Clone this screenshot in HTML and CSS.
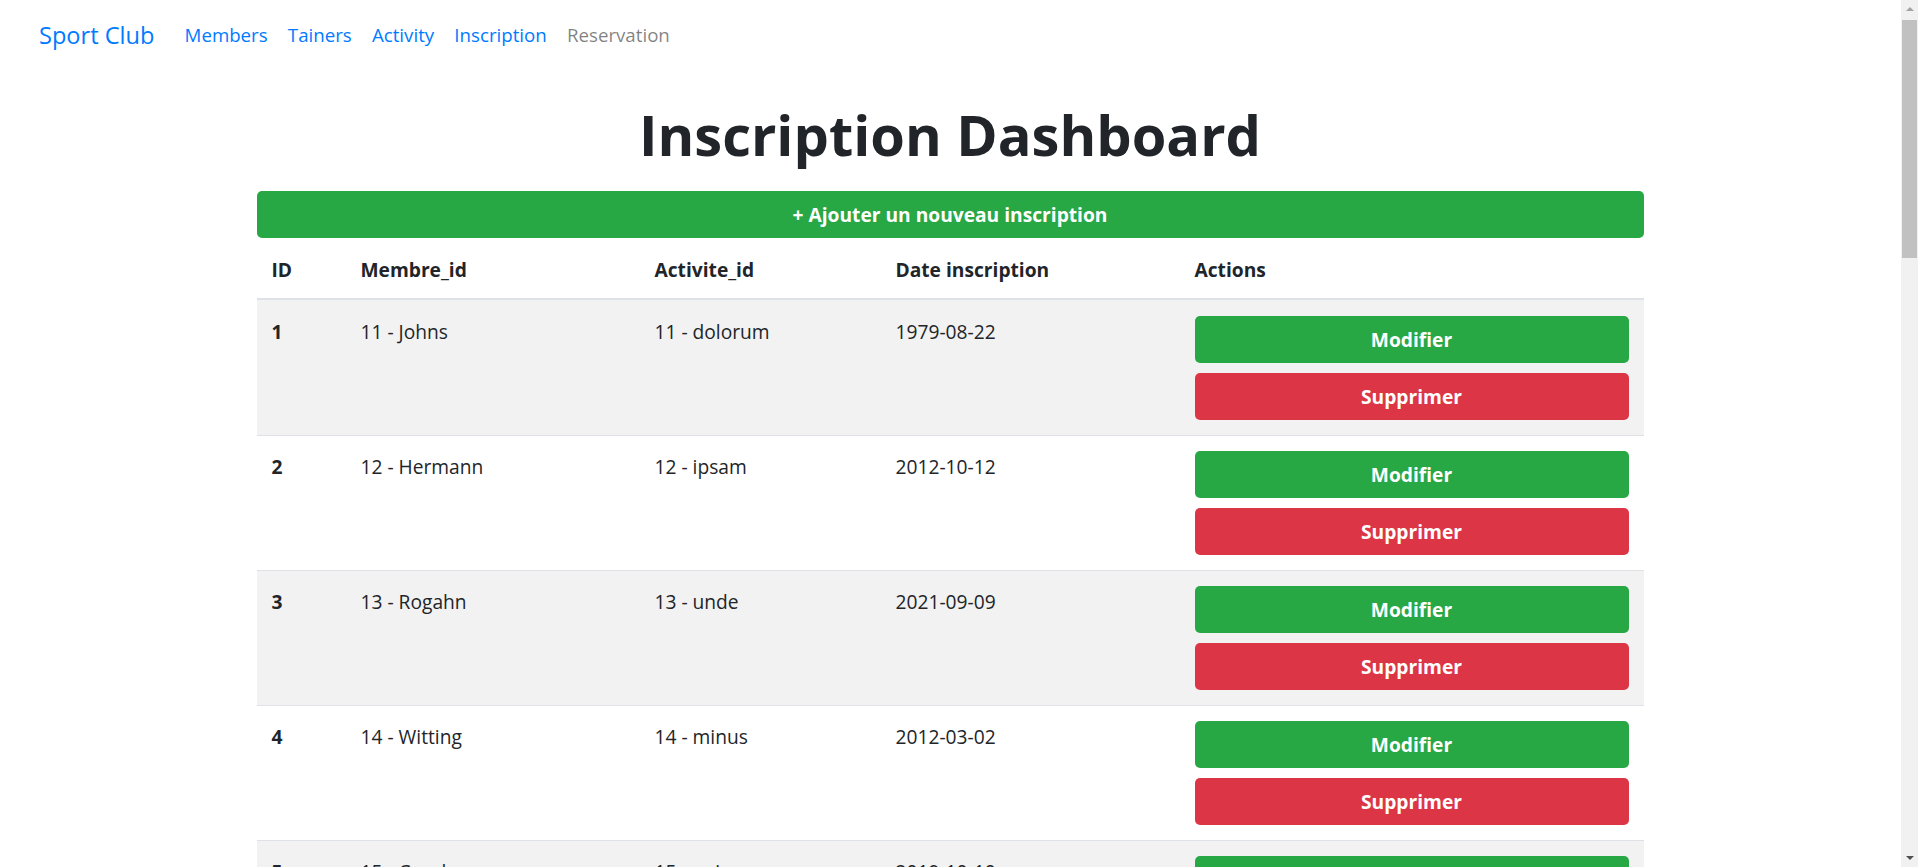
FILE: index.html
```html
<!DOCTYPE html>
<html lang="fr">
<head>
<meta charset="utf-8">
<title>Inscription Dashboard</title>
<link rel="stylesheet" href="styles.css">
</head>
<body>
<nav class="navbar">
  <a class="brand" href="#">Sport Club</a>
  <ul class="nav">
    <li><a class="nav-link" href="#">Members</a></li>
    <li><a class="nav-link" href="#">Tainers</a></li>
    <li><a class="nav-link" href="#">Activity</a></li>
    <li><a class="nav-link" href="#">Inscription</a></li>
    <li><a class="nav-link muted" href="#">Reservation</a></li>
  </ul>
</nav>
<main class="container">
  <h1 class="title">Inscription Dashboard</h1>
  <a class="btn btn-success btn-add" href="#">+ Ajouter un nouveau inscription</a>
  <table class="table">
    <colgroup>
      <col class="c-id"><col class="c-membre"><col class="c-act"><col class="c-date"><col class="c-actions">
    </colgroup>
    <thead>
      <tr><th>ID</th><th>Membre_id</th><th>Activite_id</th><th>Date inscription</th><th>Actions</th></tr>
    </thead>
    <tbody>
      <tr><th>1</th><td>11 - Johns</td><td>11 - dolorum</td><td>1979-08-22</td><td class="actions"><a class="btn btn-success" href="#">Modifier</a><a class="btn btn-danger" href="#">Supprimer</a></td></tr>
      <tr><th>2</th><td>12 - Hermann</td><td>12 - ipsam</td><td>2012-10-12</td><td class="actions"><a class="btn btn-success" href="#">Modifier</a><a class="btn btn-danger" href="#">Supprimer</a></td></tr>
      <tr><th>3</th><td>13 - Rogahn</td><td>13 - unde</td><td>2021-09-09</td><td class="actions"><a class="btn btn-success" href="#">Modifier</a><a class="btn btn-danger" href="#">Supprimer</a></td></tr>
      <tr><th>4</th><td>14 - Witting</td><td>14 - minus</td><td>2012-03-02</td><td class="actions"><a class="btn btn-success" href="#">Modifier</a><a class="btn btn-danger" href="#">Supprimer</a></td></tr>
      <tr><th>5</th><td>15 - Crooks</td><td>15 - enim</td><td>2019-10-10</td><td class="actions"><a class="btn btn-success" href="#">Modifier</a><a class="btn btn-danger" href="#">Supprimer</a></td></tr>
      <tr><th>6</th><td>16 - Kuhn</td><td>16 - quia</td><td>2005-04-17</td><td class="actions"><a class="btn btn-success" href="#">Modifier</a><a class="btn btn-danger" href="#">Supprimer</a></td></tr>
    </tbody>
  </table>
</main>
<div class="scrollbar" aria-hidden="true">
  <span class="sb-arrow sb-up"></span>
  <span class="sb-thumb"></span>
  <span class="sb-arrow sb-down"></span>
</div>
</body>
</html>
```
FILE: styles.css
```css
body {
  margin: 0 18px 0 0;
  font-family: "Open Sans", "Liberation Sans", sans-serif;
  font-size: 19.2px;
  line-height: 1.5;
  color: #212529;
  background: #fff;
}
a {
  text-decoration: none;
}
.navbar {
  display: flex;
  align-items: center;
  height: 71px;
  padding: 0 39px;
}
.brand {
  color: #007bff;
  font-size: 23.6px;
  margin-right: 20px;
}
.nav {
  display: flex;
  list-style: none;
  margin: 0;
  padding: 0;
}
.nav-link {
  display: block;
  padding: 0 10.1px;
  font-size: 18.7px;
  color: #007bff;
}
.nav-link.muted {
  color: rgba(0, 0, 0, 0.5);
}
.container {
  width: 1387px;
  margin: 0 auto;
}
.title {
  margin: 29px 0 22px;
  text-align: center;
  font-size: 56px;
  line-height: 69px;
  font-weight: 700;
}
.btn {
  display: block;
  box-sizing: border-box;
  height: 47px;
  padding-top: 1px;
  line-height: 46px;
  text-align: center;
  font-weight: 700;
  color: #fff;
  border-radius: 5px;
}
.btn-success {
  background: #28a745;
}
.btn-danger {
  background: #dc3545;
}
.table {
  width: 100%;
  border-collapse: collapse;
  table-layout: fixed;
}
.c-id { width: 89px; }
.c-membre { width: 294px; }
.c-act { width: 241px; }
.c-date { width: 299px; }
.c-actions { width: 464px; }
.table th,
.table td {
  text-align: left;
  vertical-align: top;
  padding: 15px;
  line-height: 29px;
}
.table thead th {
  padding: 17px 15px 14px;
  border-bottom: 2px solid #dee2e6;
}
.table tbody th,
.table tbody td {
  border-top: 1px solid #dee2e6;
  font-weight: 400;
}
.table tbody th {
  font-weight: 700;
}
.table tbody th,
.table tbody td:not(.actions) {
  padding-top: 16px;
  padding-bottom: 14px;
}
.table tbody tr:nth-child(odd) {
  background: #f2f2f2;
}
.table tbody tr:first-child th,
.table tbody tr:first-child td {
  border-top: 0;
  padding-top: 17px;
}
.table tbody tr:first-child td.actions {
  padding-top: 16px;
}
.actions .btn + .btn {
  margin-top: 10px;
}
.scrollbar {
  position: fixed;
  top: 0;
  right: 0;
  bottom: 0;
  width: 17px;
  background: #f1f1f1;
  display: flex;
  flex-direction: column;
  align-items: center;
}
.sb-arrow {
  width: 0;
  height: 0;
  border-left: 4px solid transparent;
  border-right: 4px solid transparent;
}
.sb-up {
  margin-top: 7px;
  border-bottom: 4px solid #a3a3a3;
}
.sb-down {
  margin-top: auto;
  margin-bottom: 7px;
  border-top: 4px solid #505050;
}
.sb-thumb {
  margin-top: 9px;
  width: 15px;
  height: 238px;
  background: #c1c1c1;
}
```
